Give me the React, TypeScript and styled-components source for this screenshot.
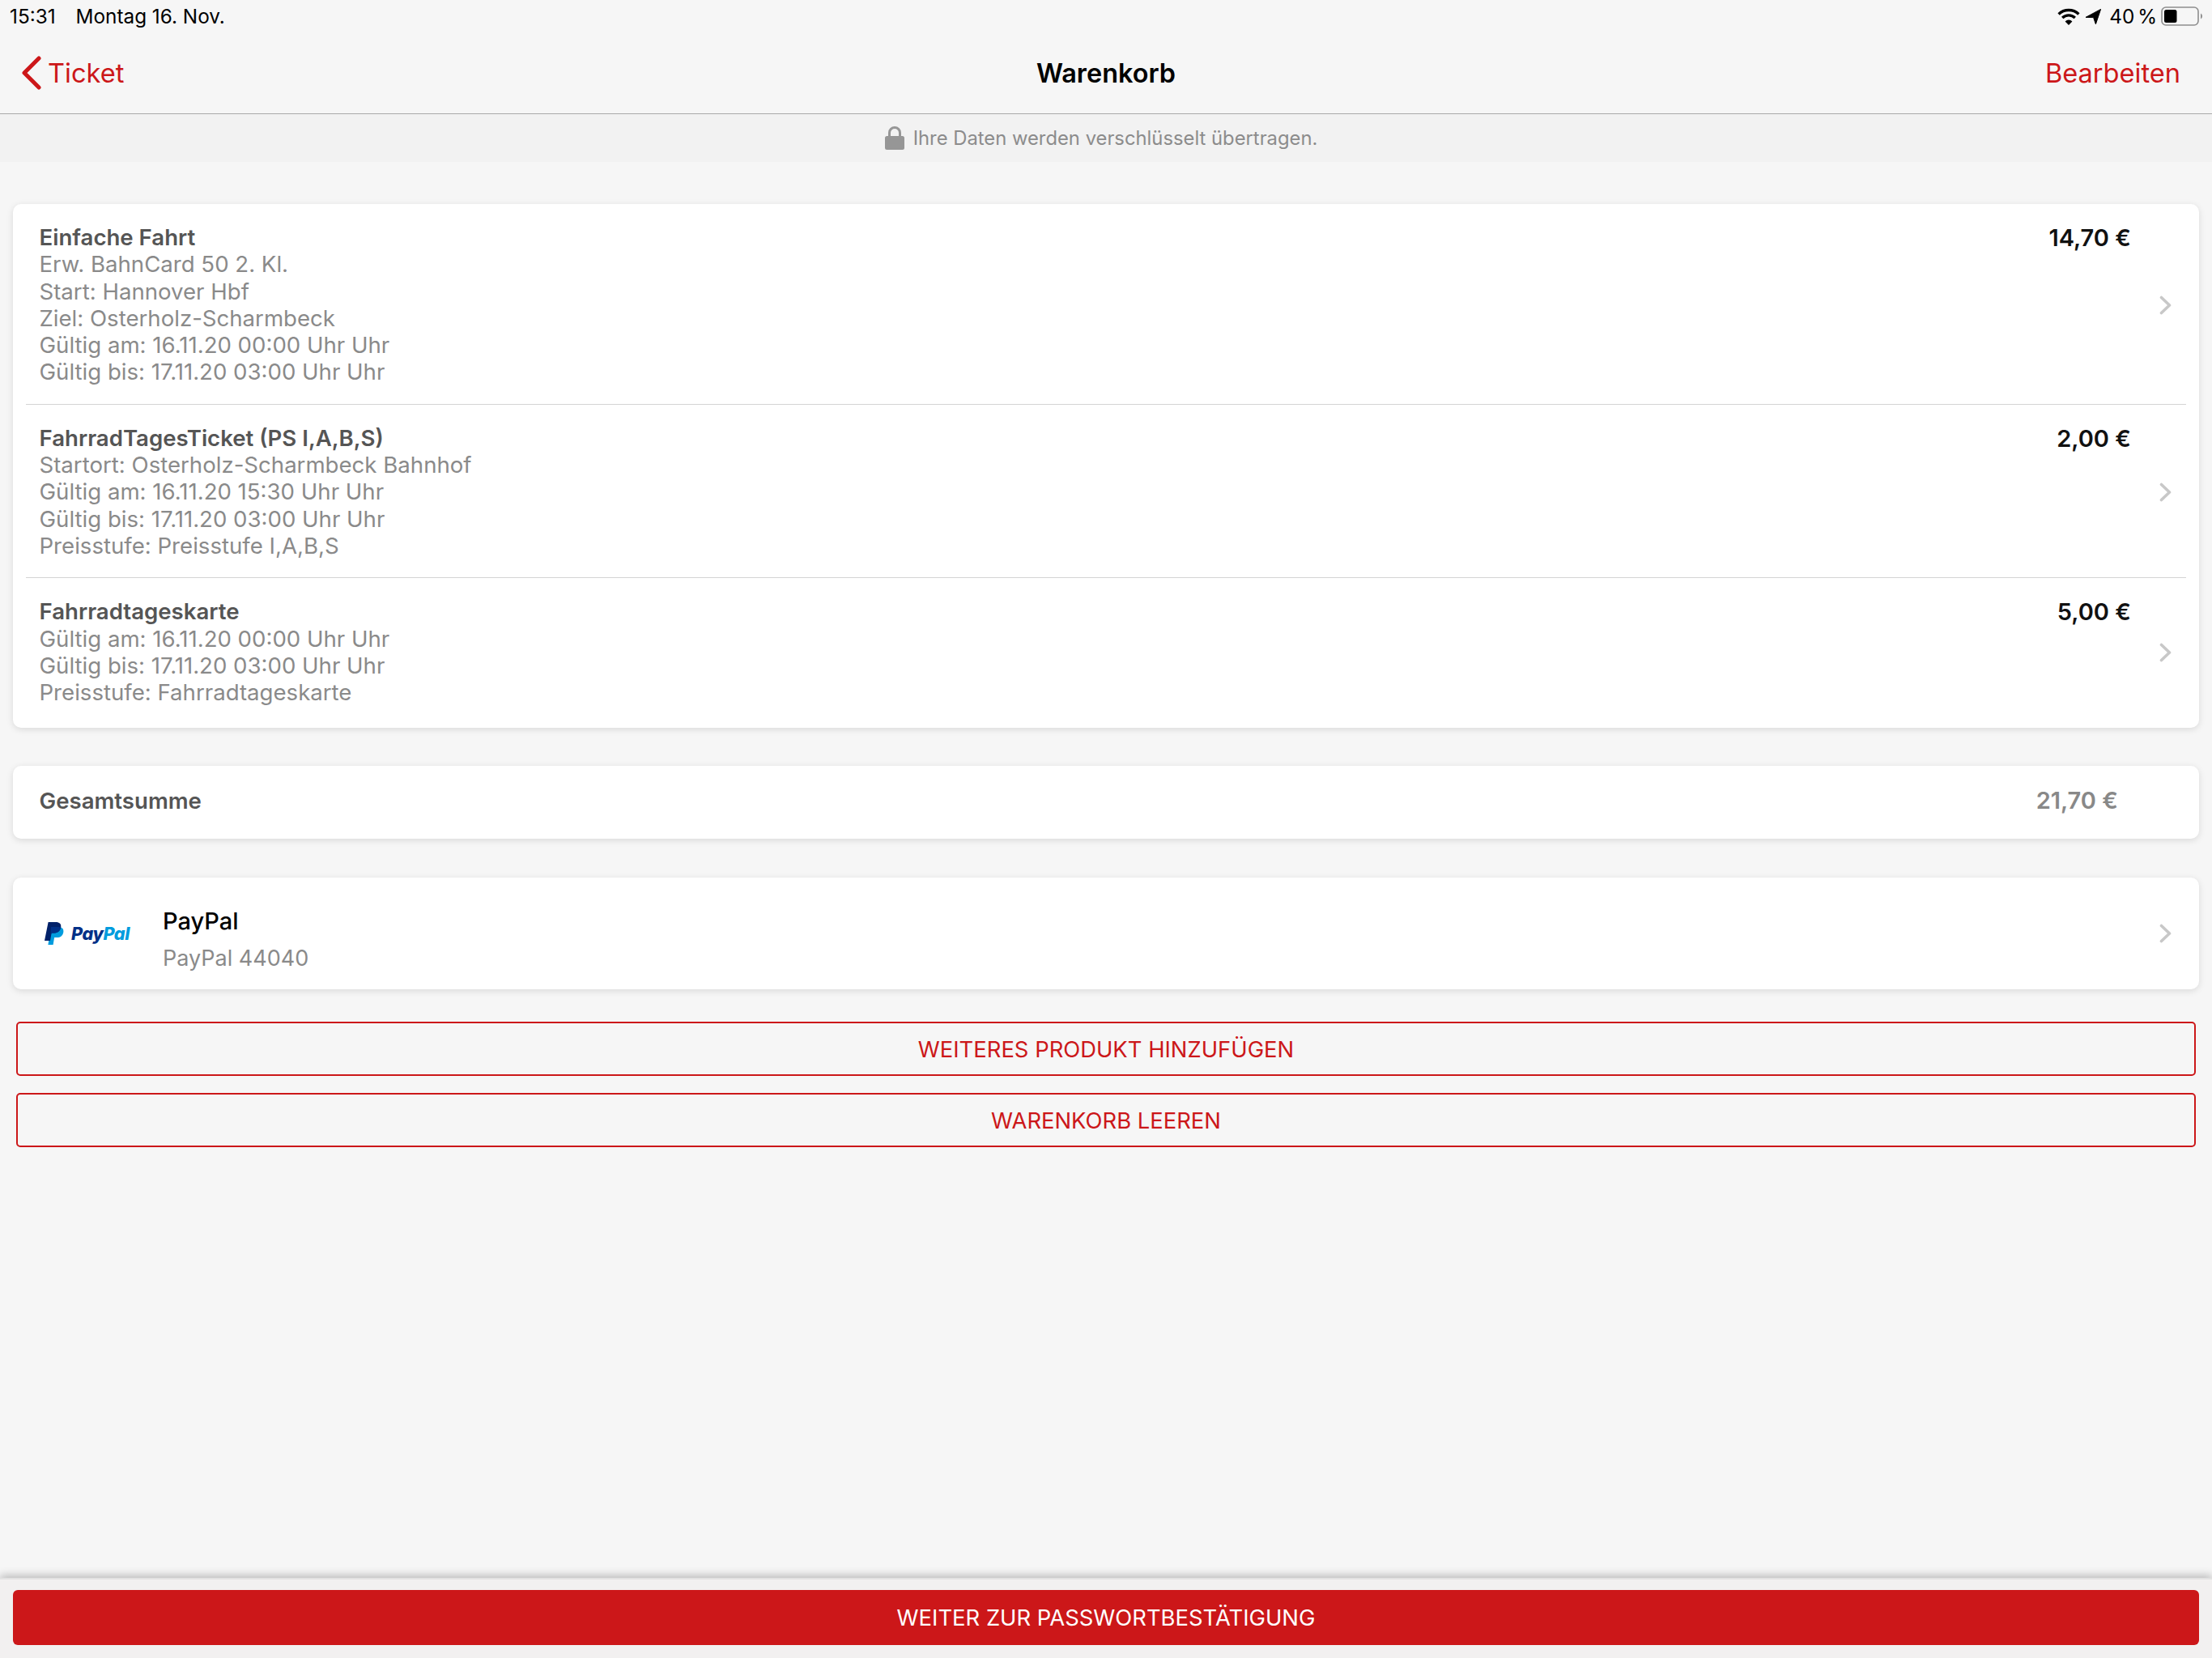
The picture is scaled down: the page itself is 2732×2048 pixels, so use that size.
import React from "react"
import styled, { createGlobalStyle } from "styled-components"

const RED = "#cc1719"

const GlobalStyle = createGlobalStyle`
  html, body {
    margin: 0;
    padding: 0;
    background: #f6f6f6;
  }
  * {
    box-sizing: border-box;
  }
`

const Page = styled.div`
  width: 2732px;
  height: 2048px;
  display: flex;
  flex-direction: column;
  overflow: hidden;
  background: #f6f6f6;
  font-family: Inter, "Liberation Sans", sans-serif;
  font-size: 27.6px;
`

const StatusBar = styled.div`
  height: 40px;
  padding: 0 10px 0 12px;
  display: flex;
  align-items: center;
  justify-content: space-between;
  color: #000;
  font-size: 24.3px;
`

const StatusGroup = styled.div`
  display: flex;
  align-items: center;
`

const StatusDate = styled.span`
  margin-left: 25px;
`

const Percent = styled.span`
  margin: 0 5px 0 10px;
  word-spacing: -3px;
`

const NavBar = styled.div`
  height: 101px;
  padding: 0 39px;
  display: grid;
  grid-template-columns: 1fr auto 1fr;
  align-items: center;
  border-bottom: 1px solid #a9a9a9;
`

const BackLink = styled.div`
  margin-left: -13px;
  display: flex;
  align-items: center;
  gap: 8px;
  color: ${RED};
  font-size: 32.6px;
`

const NavTitle = styled.div`
  font-size: 32.4px;
  font-weight: 600;
  color: #000;
`

const NavAction = styled.div`
  justify-self: end;
  color: ${RED};
  font-size: 32.6px;
`

const SecureBar = styled.div`
  height: 59px;
  padding-right: 12px;
  display: flex;
  align-items: center;
  justify-content: center;
  gap: 11px;
  background: #f2f2f2;
  color: #8c8c8c;
  font-size: 23.8px;
`

const Main = styled.div`
  flex: 1;
  padding-top: 52px;
  display: flex;
  flex-direction: column;
`

const Card = styled.div<{ $gap: number }>`
  margin: 0 16px ${p => p.$gap}px;
  background: #fff;
  border-radius: 10px;
  box-shadow: 0 2px 9px rgba(0, 0, 0, 0.12);
`

const TicketRow = styled.div<{ $bottom: number; $divided?: boolean }>`
  position: relative;
  display: flex;
  align-items: center;
  padding: 25px 34px ${p => p.$bottom}px 32.5px;
  ${p =>
    p.$divided &&
    `
    &::after {
      content: "";
      position: absolute;
      left: 16px;
      right: 16px;
      bottom: 0;
      height: 1px;
      background: #d4d4d4;
    }
  `}
`

const TicketBody = styled.div`
  flex: 1;
  display: flex;
  align-items: flex-start;
  justify-content: space-between;
  margin-right: 35px;
`

const Lines = styled.div`
  line-height: 33.3px;
  color: #8a8a8a;
`

const Line = styled.div``

const TicketName = styled.div`
  font-weight: 600;
  color: #555;
`

const Price = styled.div`
  line-height: 33.3px;
  font-size: 29px;
  font-weight: 600;
  color: #111;
`

const TotalRow = styled.div`
  height: 90px;
  padding: 0 100px 5px 32.5px;
  display: flex;
  align-items: center;
  justify-content: space-between;
  font-weight: 600;
  color: #555;
`

const TotalPrice = styled.div`
  font-size: 29px;
  color: #888;
`

const PaymentRow = styled.div`
  height: 138px;
  padding: 0 34px 0 39px;
  display: flex;
  align-items: center;
`

const PayPalLogo = styled.div`
  width: 146px;
  display: flex;
  align-items: center;
  gap: 9px;
`

const PayPalWord = styled.span`
  font-size: 21.6px;
  font-weight: 800;
  font-style: italic;
  letter-spacing: -0.4px;
  color: #003087;
`

const PayPalWordLight = styled.span`
  color: #009cde;
`

const PaymentText = styled.div`
  flex: 1;
  padding-top: 13px;
  display: flex;
  flex-direction: column;
  gap: 12px;
`

const PaymentName = styled.div`
  font-size: 29px;
  font-weight: 500;
  color: #000;
`

const PaymentDetail = styled.div`
  font-size: 27px;
  color: #8a8a8a;
`

const OutlineButton = styled.div<{ $gap: number }>`
  margin: 0 20px ${p => p.$gap}px;
  height: 67px;
  display: flex;
  align-items: center;
  justify-content: center;
  border: 2px solid ${RED};
  border-radius: 5px;
  color: ${RED};
  font-size: 27.4px;
`

const Footer = styled.div`
  height: 99px;
  padding: 15px 16px 16px;
  background: #f2f0f0;
  border-top: 2px solid #e2e2e2;
  box-shadow: 0 -3px 10px rgba(0, 0, 0, 0.25);
`

const PrimaryButton = styled.div`
  height: 68px;
  margin-top: -2px;
  display: flex;
  align-items: center;
  justify-content: center;
  border-radius: 6px;
  background: ${RED};
  color: #fff;
  font-size: 27.4px;
`

const WifiIcon = () => (
  <svg width="28" height="21" viewBox="0 0 28 21" fill="none" stroke="#000" strokeWidth="3.4">
    <path d="M1.6 7.4a18 18 0 0 1 24.8 0" />
    <path d="M6.2 12a11.4 11.4 0 0 1 15.6 0" />
    <path d="M14 21l-4.4-4.6a6.2 6.2 0 0 1 8.8 0z" fill="#000" stroke="none" />
  </svg>
)

const ArrowIcon = () => (
  <svg width="19" height="19" viewBox="0 0 19 19" style={{ marginLeft: 7 }}>
    <path d="M0 10.4 18.6 0.4 12.4 18.8 9.6 10.6z" fill="#000" stroke="#000" strokeLinejoin="round" />
  </svg>
)

const BatteryIcon = () => (
  <svg width="53" height="24" viewBox="0 0 53 24">
    <rect x="1" y="1" width="45" height="22" rx="5" fill="none" stroke="#8e8e8e" strokeWidth="1.6" />
    <rect x="4" y="4" width="15.5" height="16" rx="2.5" fill="#000" />
    <path d="M49 8.5a4 4 0 0 1 0 7z" fill="#8e8e8e" />
  </svg>
)

const BackChevron = () => (
  <svg width="25" height="42" viewBox="0 0 25 42" fill="none" stroke={RED} strokeWidth="5" strokeLinecap="round" strokeLinejoin="round">
    <path d="M22 3 4 21l18 18" />
  </svg>
)

const LockIcon = () => (
  <svg width="24" height="29" viewBox="0 0 24 29">
    <path d="M5.5 13V8a6.5 6.5 0 0 1 13 0v5" fill="none" stroke="#969696" strokeWidth="3" />
    <rect x="0" y="12" width="24" height="17" rx="2.5" fill="#969696" />
  </svg>
)

const RowChevron = () => (
  <svg width="15" height="24" viewBox="0 0 15 24" fill="none" stroke="#c8c8c8" strokeWidth="3.6" strokeLinecap="round" strokeLinejoin="round">
    <path d="M2.5 2.5l10 9.5-10 9.5" />
  </svg>
)

const PayPalMark = () => (
  <svg width="24" height="28" viewBox="0 0 24 28">
    <path d="M8 6h9c4.5 0 7 2.4 6.3 6.4-.8 4.4-3.7 6.6-8 6.6h-3.2L10.6 28H4.4z" fill="#009cde" />
    <path d="M4.6 0h9.2c4.6 0 7.2 2.3 6.4 6.5-.8 4.5-3.9 7-8.4 7H8.6L7 23H0z" fill="#012169" />
    <path d="M8 6h9c1.3 0 2.4.2 3.2.6-.9 4.2-3.9 6.9-8.4 6.9H8.6L7.5 17z" fill="#003087" />
  </svg>
)

interface Ticket {
  name: string
  price: string
  lines: string[]
  bottom: number
}

const tickets: Ticket[] = [
  {
    name: "Einfache Fahrt",
    price: "14,70 €",
    lines: [
      "Erw. BahnCard 50 2. Kl.",
      "Start: Hannover Hbf",
      "Ziel: Osterholz-Scharmbeck",
      "Gültig am: 16.11.20 00:00 Uhr Uhr",
      "Gültig bis: 17.11.20 03:00 Uhr Uhr"
    ],
    bottom: 23
  },
  {
    name: "FahrradTagesTicket (PS I,A,B,S)",
    price: "2,00 €",
    lines: [
      "Startort: Osterholz-Scharmbeck Bahnhof",
      "Gültig am: 16.11.20 15:30 Uhr Uhr",
      "Gültig bis: 17.11.20 03:00 Uhr Uhr",
      "Preisstufe: Preisstufe I,A,B,S"
    ],
    bottom: 23
  },
  {
    name: "Fahrradtageskarte",
    price: "5,00 €",
    lines: [
      "Gültig am: 16.11.20 00:00 Uhr Uhr",
      "Gültig bis: 17.11.20 03:00 Uhr Uhr",
      "Preisstufe: Fahrradtageskarte"
    ],
    bottom: 27
  }
]

const App: React.FC = () => {
  return (
    <Page>
      <GlobalStyle />
      <StatusBar>
        <StatusGroup>
          <span>15:31</span>
          <StatusDate>Montag 16. Nov.</StatusDate>
        </StatusGroup>
        <StatusGroup>
          <WifiIcon />
          <ArrowIcon />
          <Percent>40 %</Percent>
          <BatteryIcon />
        </StatusGroup>
      </StatusBar>
      <NavBar>
        <BackLink>
          <BackChevron />
          Ticket
        </BackLink>
        <NavTitle>Warenkorb</NavTitle>
        <NavAction>Bearbeiten</NavAction>
      </NavBar>
      <SecureBar>
        <LockIcon />
        Ihre Daten werden verschlüsselt übertragen.
      </SecureBar>
      <Main>
        <Card $gap={47}>
          {tickets.map((ticket, i) => (
            <TicketRow key={ticket.name} $bottom={ticket.bottom} $divided={i < tickets.length - 1}>
              <TicketBody>
                <Lines>
                  <TicketName>{ticket.name}</TicketName>
                  {ticket.lines.map(line => (
                    <Line key={line}>{line}</Line>
                  ))}
                </Lines>
                <Price>{ticket.price}</Price>
              </TicketBody>
              <RowChevron />
            </TicketRow>
          ))}
        </Card>
        <Card $gap={48}>
          <TotalRow>
            <span>Gesamtsumme</span>
            <TotalPrice>21,70 €</TotalPrice>
          </TotalRow>
        </Card>
        <Card $gap={40}>
          <PaymentRow>
            <PayPalLogo>
              <PayPalMark />
              <PayPalWord>
                Pay<PayPalWordLight>Pal</PayPalWordLight>
              </PayPalWord>
            </PayPalLogo>
            <PaymentText>
              <PaymentName>PayPal</PaymentName>
              <PaymentDetail>PayPal 44040</PaymentDetail>
            </PaymentText>
            <RowChevron />
          </PaymentRow>
        </Card>
        <OutlineButton $gap={21}>WEITERES PRODUKT HINZUFÜGEN</OutlineButton>
        <OutlineButton $gap={0}>WARENKORB LEEREN</OutlineButton>
      </Main>
      <Footer>
        <PrimaryButton>WEITER ZUR PASSWORTBESTÄTIGUNG</PrimaryButton>
      </Footer>
    </Page>
  )
}

export default App
